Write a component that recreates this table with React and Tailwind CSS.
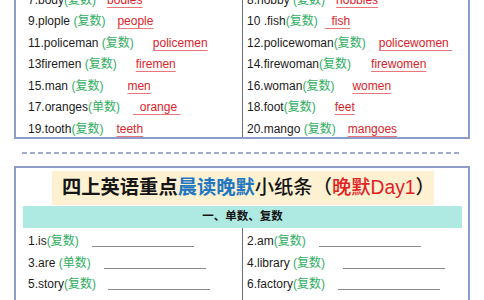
import React from 'react';

const FONT = "font-['Liberation_Sans','Noto_Sans_CJK_SC',sans-serif]";

const topLeft = [
  { n: '7.body',       s: false, q: '复数', a: 'bodies',                 g: 11 },
  { n: '9.plople',     s: true,  q: '复数', a: 'people',                 g: 12 },
  { n: '11.policeman', s: true,  q: '复数', a: 'policemen',              g: 19 },
  { n: '13firemen',    s: true,  q: '复数', a: 'firemen',                g: 19 },
  { n: '15.man',       s: true,  q: '复数', a: 'men',                    g: 24 },
  { n: '17.oranges',   s: false, q: '单数', a: '\u00a0\u00a0orange\u00a0', g: 13 },
  { n: '19.tooth',     s: false, q: '复数', a: 'teeth',                  g: 13 },
];

const topRight = [
  { n: '8.hobby',        s: true,  q: '复数', a: 'hobbies',             g: 11 },
  { n: '10 .fish',       s: false, q: '复数', a: '\u00a0\u00a0fish',    g: 7 },
  { n: '12.policewoman', s: false, q: '复数', a: 'policewomen\u00a0',   g: 13 },
  { n: '14.firewoman',   s: false, q: '复数', a: 'firewomen',           g: 20 },
  { n: '16.woman',       s: false, q: '复数', a: 'women',               g: 18 },
  { n: '18.foot',        s: false, q: '复数', a: 'feet',                g: 19 },
  { n: '20.mango',       s: true,  q: '复数', a: 'mangoes',             g: 12 },
];

const quizLeft = [
  { n: '1.is',    s: false, q: '复数', g: 13 },
  { n: '3.are',   s: true,  q: '单数', g: 13 },
  { n: '5.story', s: false, q: '复数', g: 12 },
];

const quizRight = [
  { n: '2.am',      s: false, q: '复数', g: 13 },
  { n: '4.library', s: true,  q: '复数', g: 18 },
  { n: '6.factory', s: false, q: '复数', g: 13 },
];

function Label({ n, s, q }) {
  return (
    <span className="whitespace-pre text-[#1c1c1c]">
      {n}{s ? ' ' : ''}<span className="text-[#2fae5f]">({q})</span>
    </span>
  );
}

// answer row: word + qualifier, then the red underlined answer
function AnswerRow({ row }) {
  return (
    <div className="h-[21.5px] flex items-center whitespace-pre">
      <Label {...row} />
      <span
        style={{ marginLeft: row.g }}
        className="text-[#d9232b] underline decoration-[#e9767a] underline-offset-[3px]"
      >
        {row.a}
      </span>
    </div>
  );
}

// quiz row: word + qualifier, then a blank line to write on
function BlankRow({ row }) {
  return (
    <div className="h-[21.5px] flex items-center">
      <Label {...row} />
      <span style={{ marginLeft: row.g }} className="w-[102px] h-[12px] border-b-[1.5px] border-[#8a8a8a]" />
    </div>
  );
}

export default function App() {
  return (
    <div className={`w-[484px] h-[300px] overflow-hidden bg-white flex flex-col text-[12px] ${FONT}`}>

      {/* Answer sheet (cut off at the top) */}
      <div className="-mt-[11px] ml-[14px] w-[456px] h-[150px] shrink-0 border-x-2 border-b-2 border-[#8e9cc9] flex">
        <div className="w-[227px] border-r border-[#6b6f7a] pl-[12px]">
          {topLeft.map((r) => <AnswerRow key={r.n} row={r} />)}
        </div>
        <div className="flex-1 pl-[4px]">
          {topRight.map((r) => <AnswerRow key={r.n} row={r} />)}
        </div>
      </div>

      {/* Cut line */}
      <div className="mt-[13px] ml-[22px] w-[440px] h-[1.5px] shrink-0 bg-[repeating-linear-gradient(90deg,#9eabd3_0_5px,transparent_5px_8px)]" />

      {/* Quiz sheet */}
      <div className="mt-[12px] ml-[14px] w-[456px] flex-1 border-x-2 border-t-2 border-[#8e9cc9] pt-[3px] flex flex-col">
        <div className="ml-[36px] w-[382px] h-[34px] bg-[#fdf1d2] flex items-center pl-[10px] text-[19.3px] leading-none text-[#161616] whitespace-nowrap">
          <span className="font-bold">四上英语重点</span>
          <span className="font-bold text-[#2377c0]">晨读晚默</span>
          <span className="font-medium">小纸条（</span>
          <span className="font-medium text-[#e0211f]">晚默Day1</span>
          <span className="font-medium">）</span>
        </div>
        <div className="ml-[7px] w-[439px] h-[22px] mt-[1px] bg-[#aee9e2] flex items-center justify-center text-[11.5px] font-bold text-[#141414]">
          一、单数、复数
        </div>
        <div className="flex flex-1">
          <div className="w-[227px] border-r border-[#6b6f7a] pl-[12px] pt-[3px]">
            {quizLeft.map((r) => <BlankRow key={r.n} row={r} />)}
          </div>
          <div className="flex-1 pl-[4px] pt-[3px]">
            {quizRight.map((r) => <BlankRow key={r.n} row={r} />)}
          </div>
        </div>
      </div>
    </div>
  );
}
